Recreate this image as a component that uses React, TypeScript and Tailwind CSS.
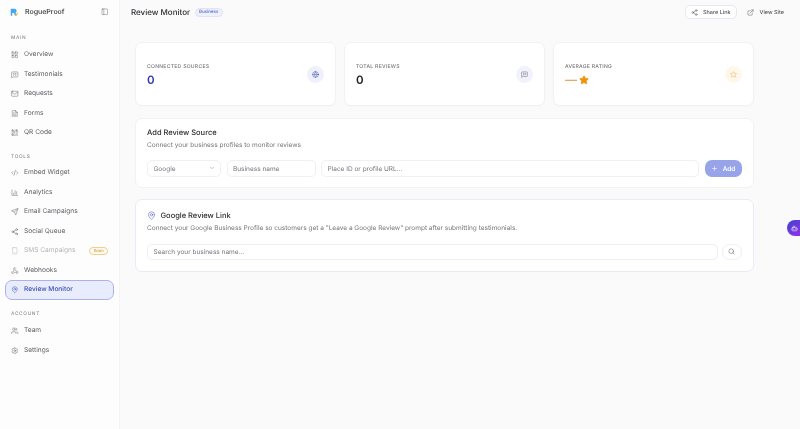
import React from "react";
import { LayoutGrid, MessageSquareQuote, Mail, FileText, QrCode, CodeXml, ChartColumn, Send, Share2, Smartphone, Webhook, MapPin, Users, Settings, PanelLeft, Globe, Star, ExternalLink, ChevronDown, Plus, Search, Bot } from "lucide-react";

const Item = ({ icon: I, label, active, soon, dim }: any) => (
  <div className={`flex items-center h-[19.5px] mx-[5px] gap-[5.5px] text-[6.6px] whitespace-nowrap ${active ? "pl-[5px] pr-[6px] rounded-[7px] bg-[#e8ecfc] border border-[#a9b3ea] text-[#3f4db0] font-medium" : "pl-[6px] pr-[6px]"} ${dim ? "text-[#b4b4b8]" : active ? "" : "text-[#5f5f66]"}`}>
    <I className="w-[7.5px] h-[7.5px] shrink-0" strokeWidth={1.5} />
    <span className="flex-1 pt-[1px]">{label}</span>
    {soon && <span className="text-[4px] leading-[5.5px] px-[3.5px] rounded-full border border-[#f0cf8c] bg-[#fffaf0] text-[#c98a1a]">Soon</span>}
  </div>
);

const Label = ({ children, className }: any) => (
  <div className={`text-[4.8px] tracking-[0.14em] font-medium text-[#8e8e95] pl-[11px] leading-[7px] ${className}`}>{children}</div>
);

const Stat = ({ label, children, iconBg, icon }: any) => (
  <div className="flex-1 h-[63.5px] bg-white rounded-[7px] border border-[#f2f2f5] shadow-[0_1px_2px_rgba(0,0,0,0.02)] flex items-center justify-between pl-[11px] pr-[11px]">
    <div className="flex flex-col gap-[1.5px] pt-[3px]">
      <div className="text-[5.1px] tracking-[0.05em] font-medium text-[#77777e] uppercase leading-[7px] whitespace-nowrap">{label}</div>
      {children}
    </div>
    <div className={`w-[17px] h-[17px] mt-[1.5px] rounded-full flex items-center justify-center ${iconBg}`}>{icon}</div>
  </div>
);

export default function App() {
  return (
    <div className="flex w-[800px] h-[429px] overflow-hidden bg-[#fafafb] text-[#222226] relative [text-rendering:geometricPrecision] blur-[0.3px]" style={{ fontFamily: "Inter, sans-serif" }}>
      <aside className="w-[120px] shrink-0 h-full bg-[#fdfdfd] border-r border-[#f4f4f6] flex flex-col">
        <div className="flex items-center h-[24px] pl-[9.5px] pr-[11px] gap-[7px]">
          <svg viewBox="0 0 12 12" className="w-[8.5px] h-[8.5px]">
            <path d="M1 1h5.5a3 3 0 0 1 1.2 5.7L9.5 11H7.2L5.5 7.2H3.2V11H1z" fill="#45a8ee" />
            <path d="M6 11.5l4.5-5.2 1.2 1-4 5z" fill="#f2bb3a" />
          </svg>
          <span className="text-[7px] font-medium flex-1 text-[#333338]">RogueProof</span>
          <PanelLeft className="w-[7.5px] h-[7.5px] text-[#66666c]" strokeWidth={1.5} />
        </div>
        <Label className="mt-[10.5px] mb-[3.5px]">MAIN</Label>
        <Item icon={LayoutGrid} label="Overview" />
        <Item icon={MessageSquareQuote} label="Testimonials" />
        <Item icon={Mail} label="Requests" />
        <Item icon={FileText} label="Forms" />
        <Item icon={QrCode} label="QR Code" />
        <Label className="mt-[11px] mb-[2.5px]">TOOLS</Label>
        <Item icon={CodeXml} label="Embed Widget" />
        <Item icon={ChartColumn} label="Analytics" />
        <Item icon={Send} label="Email Campaigns" />
        <Item icon={Share2} label="Social Queue" />
        <Item icon={Smartphone} label="SMS Campaigns" soon dim />
        <Item icon={Webhook} label="Webhooks" />
        <Item icon={MapPin} label="Review Monitor" active />
        <Label className="mt-[11px] mb-[3.5px]">ACCOUNT</Label>
        <Item icon={Users} label="Team" />
        <Item icon={Settings} label="Settings" />
      </aside>

      <main className="flex-1 min-w-0 flex flex-col">
        <header className="h-[24px] flex items-center pl-[11px] pr-[16px]">
          <h1 className="whitespace-nowrap text-[8px] font-medium text-[#2b2b30]">Review Monitor</h1>
          <span className="ml-[5px] mt-[1px] text-[4.5px] font-medium leading-[7px] px-[3px] rounded-full bg-[#eef0fb] border border-[#dfe3f7] text-[#5867c7]">Business</span>
          <div className="ml-auto flex items-center text-[5.5px] text-[#55555c] font-medium">
            <div className="flex items-center gap-[4.5px] h-[14.5px] px-[5px] bg-white border border-[#e6e8f3] rounded-[5px]">
              <Share2 className="w-[7px] h-[7px]" strokeWidth={1.6} />
              <span className="pt-[2px]">Share Link</span>
            </div>
            <div className="flex items-center gap-[6px] h-[15px] pl-[10px] pr-0">
              <ExternalLink className="w-[7px] h-[7px]" strokeWidth={1.6} />
              <span className="pt-[2px]">View Site</span>
            </div>
          </div>
        </header>
        <div className="pl-[15px] pr-[46.5px] pt-[18px] flex flex-col gap-[12px]">
          <div className="flex gap-[8.3px]">
            <Stat label="Connected Sources" iconBg="bg-[#eef0fb]" icon={<Globe className="w-[7px] h-[7px] text-[#3f4db0]" strokeWidth={1.6} />}>
              <div className="text-[11.5px] font-semibold leading-[14px] text-[#2f3cb0]">0</div>
            </Stat>
            <Stat label="Total Reviews" iconBg="bg-[#f1f2fb]" icon={<MessageSquareQuote className="w-[7px] h-[7px] text-[#5f5f70]" strokeWidth={1.6} />}>
              <div className="text-[11.5px] font-semibold leading-[14px] text-[#222226]">0</div>
            </Stat>
            <Stat label="Average Rating" iconBg="bg-[#fef8ec]" icon={<Star className="w-[7px] h-[7px] text-[#eda92e]" strokeWidth={1.6} />}>
              <div className="flex items-center gap-[2px] h-[14px]">
                <span className="text-[12px] font-semibold leading-[14px] text-[#eba864]">—</span>
                <Star className="w-[10px] h-[10px] text-[#f0930a] fill-[#f0930a]" />
              </div>
            </Stat>
          </div>

          <section className="h-[70px] bg-white rounded-[7px] border border-[#f2f2f5] px-[11px] pt-[8px]">
            <h2 className="text-[7.5px] font-medium leading-[11px] text-[#2b2b30]">Add Review Source</h2>
            <p className="text-[6.5px] leading-[10px] text-[#77777e] mt-[2px]">Connect your business profiles to monitor reviews</p>
            <div className="flex gap-[5.5px] mt-[10.5px] items-center text-[6.5px] text-[#77777e]">
              <div className="w-[74px] h-[16.5px] rounded-[5px] border border-[#f0f0f3] flex items-center justify-between px-[5.5px]">
                <span className="pt-[3px]">Google</span>
                <ChevronDown className="w-[6px] h-[6px] text-[#8e8e95]" />
              </div>
              <div className="w-[89px] h-[16.5px] rounded-[5px] border border-[#f0f0f3] flex items-center px-[5.5px] pt-[3px]">Business name</div>
              <div className="flex-1 h-[16.5px] rounded-[5px] border border-[#f0f0f3] flex items-center px-[5.5px] pt-[3px]">Place ID or profile URL...</div>
              <div className="w-[37px] h-[16.5px] rounded-[7px] bg-[#98a4e9] text-white font-semibold flex items-center justify-center gap-[5px]">
                <Plus className="w-[7px] h-[7px]" strokeWidth={2} />
                <span className="pt-[3px]">Add</span>
              </div>
            </div>
          </section>

          <section className="h-[73px] -mt-[0.5px] bg-white rounded-[7px] border border-[#e9ebf6] px-[11px] pt-[10px]">
            <div className="flex items-center gap-[4.5px]">
              <MapPin className="w-[9px] h-[9px] text-[#5867c7]" strokeWidth={1.6} />
              <h2 className="text-[7.5px] font-medium leading-[11px] text-[#2b2b30]">Google Review Link</h2>
            </div>
            <p className="text-[6.5px] leading-[10px] text-[#77777e] mt-[2px]">Connect your Google Business Profile so customers get a "Leave a Google Review" prompt after submitting testimonials.</p>
            <div className="flex gap-[4px] mt-[10.5px] items-center text-[6.5px] text-[#77777e]">
              <div className="flex-1 h-[16.5px] rounded-[5px] border border-[#f0f0f3] flex items-center px-[5.5px] pt-[3px]">Search your business name...</div>
              <div className="w-[20px] h-[16.5px] rounded-[7px] border border-[#f0f0f3] flex items-center justify-center">
                <Search className="w-[7px] h-[7px] text-[#55555c]" strokeWidth={1.6} />
              </div>
            </div>
          </section>
        </div>
      </main>

      <div className="absolute left-[787px] top-[220px] w-[20px] h-[16px] rounded-l-[8px] bg-gradient-to-br from-[#3a3fd0] to-[#a028e8] flex items-center pl-[4px]">
        <Bot className="w-[7px] h-[7px] text-white" strokeWidth={1.8} />
      </div>
    </div>
  );
}
